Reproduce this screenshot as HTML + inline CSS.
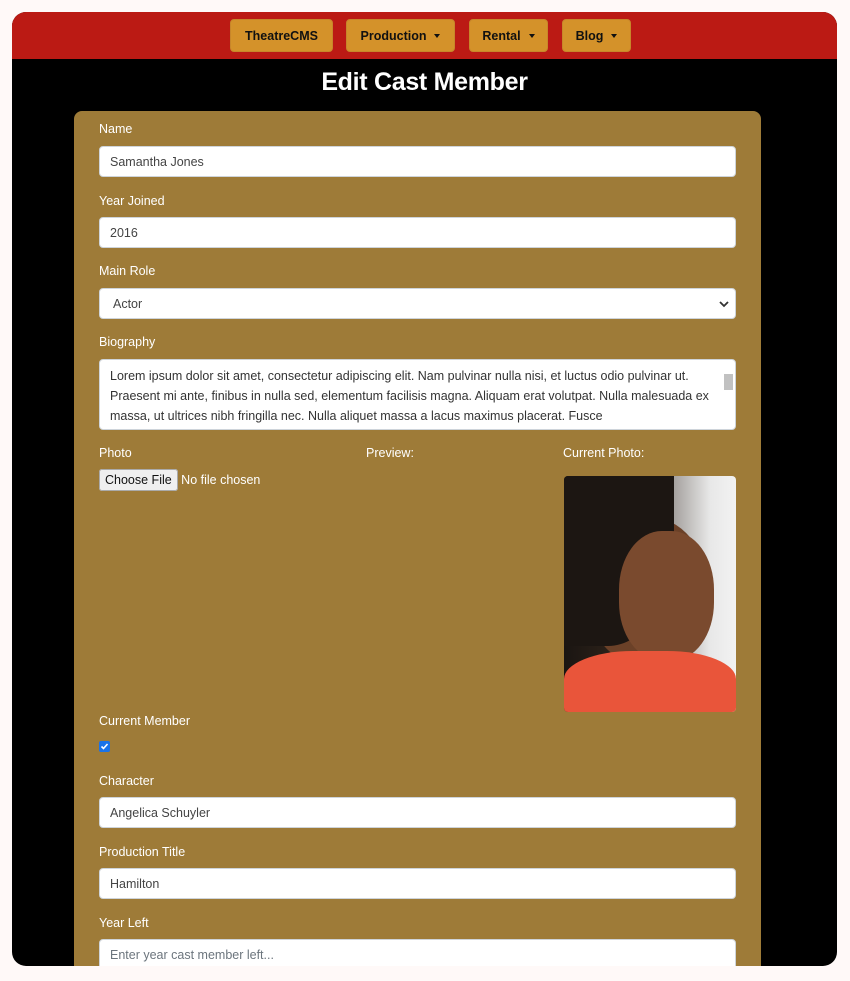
<!DOCTYPE html>
<html><head><style>
*{box-sizing:border-box}
body{margin:0;width:850px;height:981px;background:#fff9f8;font-family:"Liberation Sans",sans-serif;overflow:hidden;position:relative}
.frame{position:absolute;left:12px;top:12px;width:825px;height:954px;background:#000;border-radius:14px;overflow:hidden}
.nav{height:47px;background:#bb1a14;position:relative}
.btn{position:absolute;top:7px;height:33px;background:#d4922a;border-radius:4px;font-weight:bold;font-size:12.5px;color:#111;display:flex;align-items:center;justify-content:center;border:1px solid #c7862a}
.caret{display:inline-block;margin-left:8px;border-left:3.5px solid transparent;border-right:3.5px solid transparent;border-top:4px solid #111}
h1{position:absolute;left:0;right:0;top:56px;margin:0;text-align:center;color:#fff;font-size:25px;font-weight:bold;letter-spacing:-0.3px}
.card{position:absolute;left:62px;top:99px;width:687px;height:900px;background:#9e7b38;border-radius:8px}
.lbl{position:absolute;left:25px;color:#fff;font-size:12.5px}
.inp{position:absolute;left:25px;width:637px;height:31px;background:#fff;border:1px solid #ced4da;border-radius:4px;font-size:12.5px;color:#444;padding:8px 10px}
</style></head><body>
<div class="frame">
<div class="nav">
<div class="btn" style="left:218px;width:103px">TheatreCMS</div>
<div class="btn" style="left:334px;width:109px">Production<span class="caret"></span></div>
<div class="btn" style="left:457px;width:79px">Rental<span class="caret"></span></div>
<div class="btn" style="left:550px;width:69px">Blog<span class="caret"></span></div>
</div>
<h1>Edit Cast Member</h1>
<div class="card">
<div class="lbl" style="top:11px">Name</div>
<div class="inp" style="top:35px">Samantha Jones</div>
<div class="lbl" style="top:83px">Year Joined</div>
<div class="inp" style="top:106px">2016</div>
<div class="lbl" style="top:153px">Main Role</div>
<div class="inp" style="top:177px;padding-left:13px">Actor<svg style="position:absolute;right:6px;top:11px" width="10" height="8"><path d="M1 2l4 4 4-4" stroke="#333" stroke-width="1.8" fill="none"/></svg></div>
<div class="lbl" style="top:224px">Biography</div>
<div class="inp" style="top:248px;height:71px;padding:6px 24px 0 10px;line-height:20px;font-size:12.5px;color:#333;overflow:hidden">Lorem ipsum dolor sit amet, consectetur adipiscing elit. Nam pulvinar nulla nisi, et luctus odio pulvinar ut. Praesent mi ante, finibus in nulla sed, elementum facilisis magna. Aliquam erat volutpat. Nulla malesuada ex massa, ut ultrices nibh fringilla nec. Nulla aliquet massa a lacus maximus placerat. Fusce
<div style="position:absolute;right:2px;top:14px;width:9px;height:16px;background:#c1c1c1"></div></div>
<div class="lbl" style="top:335px">Photo</div>
<div class="lbl" style="top:335px;left:292px">Preview:</div>
<div class="lbl" style="top:335px;left:489px">Current Photo:</div>
<div style="position:absolute;left:25px;top:362px;font-size:12.5px;color:#fff"><span style="background:#efefef;color:#111;border-radius:3px;padding:3px 5px;border:1px solid #aaa">Choose File</span> No file chosen</div>
<div style="position:absolute;left:490px;top:365px;width:172px;height:236px;border-radius:4px;overflow:hidden;background:linear-gradient(90deg,#1a1512 0%,#2a2018 25%,#e8e8e8 85%,#f2f2f2 100%)">
<div style="position:absolute;left:20px;top:40px;width:125px;height:150px;border-radius:50%;background:#6b4128"></div>
<div style="position:absolute;left:0;top:0;width:110px;height:170px;border-radius:0 0 60% 0;background:#1c1612"></div>
<div style="position:absolute;left:55px;top:55px;width:95px;height:130px;border-radius:45%;background:#7a4a2e"></div>
<div style="position:absolute;left:0;top:175px;width:172px;height:70px;background:#e9553a;border-radius:40% 40% 0 0"></div>
</div>
<div class="lbl" style="top:603px">Current Member</div>
<div style="position:absolute;left:25px;top:630px;width:11px;height:11px;background:#1a73e8;border-radius:2px"><svg width="11" height="11" style="position:absolute;left:0;top:0"><path d="M2.5 5.5l2 2 4-4.5" stroke="#fff" stroke-width="1.6" fill="none"/></svg></div>
<div class="lbl" style="top:663px">Character</div>
<div class="inp" style="top:686px">Angelica Schuyler</div>
<div class="lbl" style="top:734px">Production Title</div>
<div class="inp" style="top:757px">Hamilton</div>
<div class="lbl" style="top:805px">Year Left</div>
<div class="inp" style="top:828px;color:#6c757d">Enter year cast member left...</div>
</div>
</div>
</body></html>
